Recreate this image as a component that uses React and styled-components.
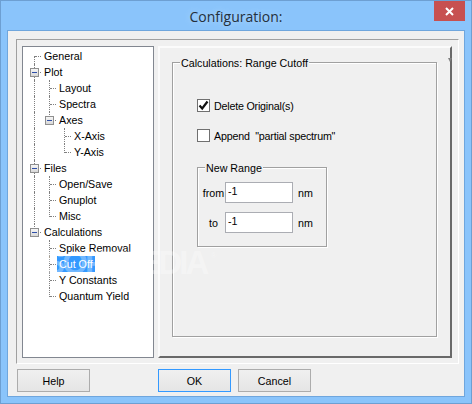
import React from 'react';
import styled, { createGlobalStyle } from 'styled-components';

const GlobalStyle = createGlobalStyle`
  html, body {
    margin: 0;
    padding: 0;
    background: #8ac4fb;
  }
  * {
    box-sizing: border-box;
  }
`;

const Window = styled.div`
  position: relative;
  width: 472px;
  height: 404px;
  display: flex;
  flex-direction: column;
  background: #8ac4fb;
  border: 1px solid #6d9fd2;
  font-family: "Liberation Sans", Arial, sans-serif;
  font-size: 10.7px;
  color: #000;
  overflow: hidden;
`;

const TitleBar = styled.div`
  position: relative;
  height: 29px;
  flex: none;
  display: flex;
  align-items: center;
  justify-content: center;
`;

const Title = styled.div`
  font-family: "Open Sans", "Noto Sans", sans-serif;
  font-size: 14px;
  color: #24303c;
  text-shadow: 0 0 6px #b9dcfd;
  padding-top: 1px;
`;

const CloseButton = styled.div`
  position: absolute;
  top: 0;
  right: 6px;
  width: 31px;
  height: 20px;
  background: #c75050;
  display: flex;
  align-items: center;
  justify-content: center;
`;

const Client = styled.div`
  flex: 1;
  margin: 0 6px 6px;
  background: #f0f0f0;
  border: 1px solid #6fa6dd;
  padding: 8px 5px 0 8px;
  display: flex;
  flex-direction: column;
`;

const Frame = styled.div`
  height: 325px;
  border-style: solid;
  border-width: 1px;
  border-color: #a0a0a0 #fff #fff #a0a0a0;
  padding: 6px 6px 5px 5px;
  display: flex;
  gap: 4px;
`;

const TreePane = styled.div`
  width: 132px;
  background: #fff;
  border: 1px solid #828790;
  padding: 1px 0 0 4px;
`;

const Row = styled.div`
  height: 16px;
  display: flex;
  align-items: center;
  white-space: nowrap;
`;

const Cell = styled.div`
  position: relative;
  width: 15px;
  height: 16px;
  flex: none;
  &::before {
    content: '';
    position: absolute;
    left: 7px;
    top: ${p => (p.$kind === 'first' ? '8px' : '0')};
    height: ${p => {
      if (p.$kind === 'blank') return '0';
      if (p.$kind === 'elbow') return '9px';
      if (p.$kind === 'first') return '8px';
      return '16px';
    }};
    border-left: 1px dotted #808080;
  }
  &::after {
    content: '';
    position: absolute;
    left: 8px;
    top: 8px;
    width: ${p => (p.$kind === 'pipe' || p.$kind === 'blank' ? '0' : '6px')};
    border-top: 1px dotted #808080;
  }
`;

const Expander = styled.div`
  position: absolute;
  z-index: 1;
  left: 3px;
  top: 4px;
  width: 9px;
  height: 9px;
  border: 1px solid #8f8f8f;
  background: linear-gradient(#f6f6f6, #d8d8d8);
  &::after {
    content: '';
    position: absolute;
    left: 1px;
    top: 3px;
    width: 5px;
    height: 1px;
    background: #2f4fa8;
  }
`;

const Label = styled.span`
  height: 16px;
  line-height: 16px;
  padding: 0 2px;
  background: ${p => (p.$selected ? '#3399ff' : 'transparent')};
  color: ${p => (p.$selected ? '#fff' : '#000')};
`;

const SettingsPane = styled.div`
  position: relative;
  flex: 1;
  border-style: solid;
  border-width: 2px;
  border-color: #fbfbfb #696969 #696969 #fbfbfb;
  padding: 14px 13px 0 12px;
`;

const ScrollMark = styled.svg`
  position: absolute;
  top: 10px;
  right: -2px;
  width: 4px;
  height: 5px;
`;

const GroupBox = styled.div`
  position: relative;
  border: 1px solid #a0a0a0;
  box-shadow: 1px 1px 0 #fff, inset 1px 1px 0 #fff;
  padding: ${p => p.$padding};
  height: ${p => p.$height}px;
  width: ${p => p.$width || 'auto'};
`;

const GroupLegend = styled.span`
  position: absolute;
  top: -7px;
  left: 7px;
  height: 14px;
  line-height: 14px;
  background: #f0f0f0;
  padding: 0 1px;
`;

const CheckRow = styled.label`
  display: flex;
  align-items: center;
  height: 13px;
  gap: 4px;
  letter-spacing: -0.2px;
  margin-bottom: ${p => p.$gap || 0}px;
`;

const CheckBox = styled.span`
  width: 13px;
  height: 13px;
  flex: none;
  border: 1px solid #707070;
  background: #fff;
  display: flex;
  align-items: center;
  justify-content: center;
`;

const RangeRow = styled.div`
  display: flex;
  align-items: center;
  height: 21px;
  margin-bottom: 9px;
`;

const RangeLabel = styled.span`
  width: 23px;
  text-align: center;
  flex: none;
`;

const RangeInput = styled.input`
  width: 68px;
  height: 21px;
  padding: 0 2px 3px;
  border: 1px solid #abadb3;
  background: #fff;
  font: inherit;
  color: #000;
  outline: none;
`;

const Unit = styled.span`
  margin-left: 5px;
`;

const ButtonBar = styled.div`
  display: flex;
  padding: 5px 0 0 1px;
`;

const Button = styled.div`
  width: 73px;
  height: 23px;
  display: flex;
  align-items: center;
  justify-content: center;
  background: linear-gradient(#f0f0f0, #e5e5e5);
  border: 1px solid ${p => (p.$focused ? '#3399ff' : '#acacac')};
  margin-left: ${p => p.$offset || 0}px;
`;

const Watermark = styled.div`
  position: absolute;
  left: 42px;
  top: 243px;
  font-family: "Liberation Sans", Arial, sans-serif;
  font-size: 33px;
  font-weight: 700;
  letter-spacing: -2.8px;
  color: rgba(255, 255, 255, 0.32);
  pointer-events: none;
  sup {
    font-size: 8px;
    font-weight: 400;
    letter-spacing: 0;
    vertical-align: 16px;
    margin-left: 4px;
  }
`;

const treeRows = [
  { label: 'General', cells: ['first'] },
  { label: 'Plot', cells: ['tee'], open: true },
  { label: 'Layout', cells: ['pipe', 'tee'] },
  { label: 'Spectra', cells: ['pipe', 'tee'] },
  { label: 'Axes', cells: ['pipe', 'elbow'], open: true },
  { label: 'X-Axis', cells: ['pipe', 'blank', 'tee'] },
  { label: 'Y-Axis', cells: ['pipe', 'blank', 'elbow'] },
  { label: 'Files', cells: ['tee'], open: true },
  { label: 'Open/Save', cells: ['pipe', 'tee'] },
  { label: 'Gnuplot', cells: ['pipe', 'tee'] },
  { label: 'Misc', cells: ['pipe', 'elbow'] },
  { label: 'Calculations', cells: ['elbow'], open: true },
  { label: 'Spike Removal', cells: ['blank', 'tee'] },
  { label: 'Cut Off', cells: ['blank', 'tee'], selected: true },
  { label: 'Y Constants', cells: ['blank', 'tee'] },
  { label: 'Quantum Yield', cells: ['blank', 'elbow'] },
];

const App = () => (
  <>
    <GlobalStyle />
    <Window>
      <TitleBar>
        <Title>Configuration:</Title>
        <CloseButton>
          <svg width="9" height="9" viewBox="0 0 9 9">
            <path d="M1 1 L8 8 M8 1 L1 8" stroke="#fff" strokeWidth="2" />
          </svg>
        </CloseButton>
      </TitleBar>
      <Client>
        <Frame>
          <TreePane>
            {treeRows.map(row => (
              <Row key={row.label}>
                {row.cells.map((kind, i) => (
                  <Cell key={i} $kind={kind}>
                    {row.open && i === row.cells.length - 1 && <Expander />}
                  </Cell>
                ))}
                <Label $selected={row.selected}>{row.label}</Label>
              </Row>
            ))}
          </TreePane>
          <SettingsPane>
            <ScrollMark viewBox="0 0 4 5">
              <path d="M0 0 H4 L2 4 Z" fill="#808080" />
            </ScrollMark>
            <GroupBox $height={275} $padding="36px 0 0 24px">
              <GroupLegend>Calculations: Range Cutoff</GroupLegend>
              <CheckRow $gap={17}>
                <CheckBox>
                  <svg width="11" height="11" viewBox="0 0 11 11">
                    <path d="M1.5 5.5 L4.2 8.5 L9.5 1.5" fill="none" stroke="#111" strokeWidth="2.2" />
                  </svg>
                </CheckBox>
                Delete Original(s)
              </CheckRow>
              <CheckRow $gap={25}>
                <CheckBox />
                Append &nbsp;&quot;partial spectrum&quot;
              </CheckRow>
              <GroupBox $height={80} $width="130px" $padding="14px 0 0 4px">
                <GroupLegend>New Range</GroupLegend>
                <RangeRow>
                  <RangeLabel>from</RangeLabel>
                  <RangeInput defaultValue="-1" />
                  <Unit>nm</Unit>
                </RangeRow>
                <RangeRow>
                  <RangeLabel>to</RangeLabel>
                  <RangeInput defaultValue="-1" />
                  <Unit>nm</Unit>
                </RangeRow>
              </GroupBox>
            </GroupBox>
          </SettingsPane>
        </Frame>
        <ButtonBar>
          <Button>Help</Button>
          <Button $focused $offset={68}>OK</Button>
          <Button $offset={7}>Cancel</Button>
        </ButtonBar>
      </Client>
      <Watermark>SOFTPEDIA<sup>®</sup></Watermark>
    </Window>
  </>
);

export default App;
